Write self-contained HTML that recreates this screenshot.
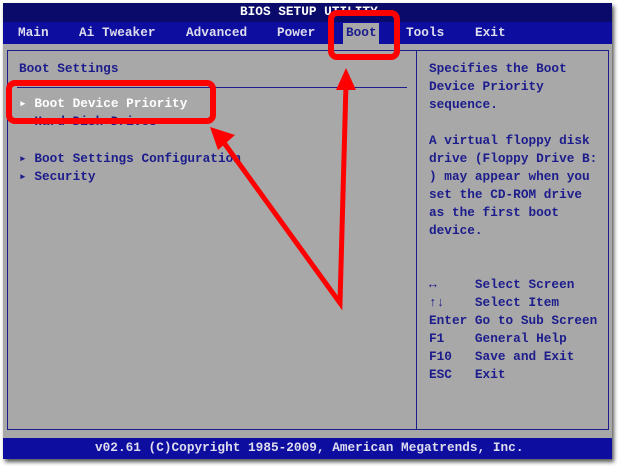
<!DOCTYPE html><html><head><style>
body{margin:0;width:619px;height:466px;background:#fff;position:relative;overflow:hidden;font-family:"Liberation Mono",monospace;}
.scr{position:absolute;left:3px;top:3px;width:609px;height:456px;background:#a8a8a8;box-shadow:2px 3px 4px #555;}
.t{position:absolute;white-space:pre;font-size:12.75px;line-height:18px;color:#1c1c8c;font-weight:bold;}
.w{color:#fff}
.m{color:#dde}
</style></head><body>
<div class="scr">
<div style="position:absolute;left:0;top:0;width:609px;height:19px;background:#0a0a6a"></div>
<div style="position:absolute;left:0;top:19px;width:609px;height:22px;background:#0d0da0"></div>
<div style="position:absolute;left:340px;top:20px;width:36px;height:21px;background:#a8a8a8"></div>
<div style="position:absolute;left:4px;top:47px;width:409px;height:378px;border:1px solid #1c1c8c;border-right:none"></div>
<div style="position:absolute;left:413px;top:47px;width:191px;height:378px;border:1px solid #1c1c8c"></div>
<div style="position:absolute;left:14px;top:84px;width:390px;height:1px;background:#1c1c8c"></div>
<div style="position:absolute;left:0;top:435px;width:609px;height:21px;background:#0d0da0"></div>
</div>
<div class="t w" style="left:240px;top:3px">BIOS SETUP UTILITY</div>
<div class="t m" style="left:18px;top:24px">Main</div>
<div class="t m" style="left:79px;top:24px">Ai Tweaker</div>
<div class="t m" style="left:186px;top:24px">Advanced</div>
<div class="t m" style="left:277px;top:24px">Power</div>
<div class="t" style="left:346px;top:24px">Boot</div>
<div class="t m" style="left:406px;top:24px">Tools</div>
<div class="t m" style="left:475px;top:24px">Exit</div>
<div class="t" style="left:19px;top:60px">Boot Settings</div>
<div class="t w" style="left:19px;top:95px">▸ Boot Device Priority</div>
<div class="t" style="left:19px;top:113px">▸ Hard Disk Drives</div>
<div class="t" style="left:19px;top:150px">▸ Boot Settings Configuration</div>
<div class="t" style="left:19px;top:168px">▸ Security</div>
<div class="t" style="left:429px;top:60px">Specifies the Boot
Device Priority
sequence.

A virtual floppy disk
drive (Floppy Drive B:
) may appear when you
set the CD-ROM drive
as the first boot
device.</div>
<div class="t" style="left:429px;top:276px">↔     Select Screen
↑↓    Select Item
Enter Go to Sub Screen
F1    General Help
F10   Save and Exit
ESC   Exit</div>
<div class="t m" style="left:95px;top:439px">v02.61 (C)Copyright 1985-2009, American Megatrends, Inc.</div>
<svg width="619" height="466" style="position:absolute;left:0;top:0">
<rect x="9" y="83" width="204" height="38" rx="6" fill="none" stroke="#f00" stroke-width="6"/>
<rect x="331" y="13" width="66" height="44" rx="6" fill="none" stroke="#f00" stroke-width="6"/>
<polyline points="222,140 340,303 346,84" fill="none" stroke="#f00" stroke-width="5"/>
<polygon points="210,127 235,135 218,150" fill="#f00"/>
<polygon points="346,68 356,90 336,90" fill="#f00"/>
</svg>
</body></html>
